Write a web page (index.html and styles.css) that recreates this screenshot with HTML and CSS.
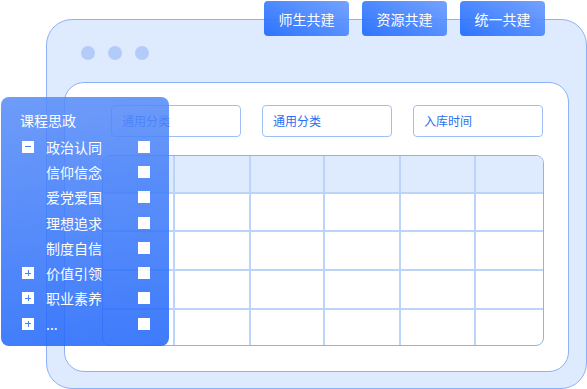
FILE: index.html
```html
<!DOCTYPE html>
<html lang="zh-CN">
<head>
    <meta charset="UTF-8">
    <title>课程思政</title>
    <link rel="stylesheet" href="styles.css">
</head>
<body>
    <div class="scene">
        <div class="window">
            <div class="dots">
                <span class="dot"></span>
                <span class="dot"></span>
                <span class="dot"></span>
            </div>
            <div class="panel">
                <div class="filters">
                    <div class="field">通用分类</div>
                    <div class="field">通用分类</div>
                    <div class="field">入库时间</div>
                </div>
                <div class="table">
                    <div class="cell head"></div><div class="cell head"></div><div class="cell head"></div><div class="cell head"></div><div class="cell head"></div><div class="cell head"></div>
                    <div class="cell"></div><div class="cell"></div><div class="cell"></div><div class="cell"></div><div class="cell"></div><div class="cell"></div>
                    <div class="cell"></div><div class="cell"></div><div class="cell"></div><div class="cell"></div><div class="cell"></div><div class="cell"></div>
                    <div class="cell"></div><div class="cell"></div><div class="cell"></div><div class="cell"></div><div class="cell"></div><div class="cell"></div>
                    <div class="cell last"></div><div class="cell last"></div><div class="cell last"></div><div class="cell last"></div><div class="cell last"></div><div class="cell last"></div>
                </div>
            </div>
        </div>

        <nav class="tabs">
            <button class="tab">师生共建</button>
            <button class="tab">资源共建</button>
            <button class="tab">统一共建</button>
        </nav>

        <aside class="tree">
            <div class="tree-title">课程思政</div>
            <div class="tree-row"><span class="toggle minus"></span><span class="label">政治认同</span><span class="check"></span></div>
            <div class="tree-row"><span></span><span class="label">信仰信念</span><span class="check"></span></div>
            <div class="tree-row"><span></span><span class="label">爱党爱国</span><span class="check"></span></div>
            <div class="tree-row"><span></span><span class="label">理想追求</span><span class="check"></span></div>
            <div class="tree-row"><span></span><span class="label">制度自信</span><span class="check"></span></div>
            <div class="tree-row"><span class="toggle plus"></span><span class="label">价值引领</span><span class="check"></span></div>
            <div class="tree-row"><span class="toggle plus"></span><span class="label">职业素养</span><span class="check"></span></div>
            <div class="tree-row"><span class="toggle plus"></span><span class="label">...</span><span class="check"></span></div>
        </aside>
    </div>
</body>
</html>
```

FILE: styles.css
```css
body {
    margin: 0;
    padding: 0;
    background-color: #fff;
    font-family: "Noto Sans CJK SC", "Noto Sans", sans-serif;
}
.scene {
    position: relative;
    width: 587px;
    height: 389px;
    overflow: hidden;
}
.window {
    box-sizing: border-box;
    width: 541px;
    height: 370px;
    margin: 19px 0 0 46px;
    padding: 0 17px 16px 17px;
    display: flex;
    flex-direction: column;
    background-color: #deebfe;
    border: 1px solid #8db1f6;
    border-radius: 26px;
}
.dots {
    display: flex;
    gap: 13px;
    margin: 26px 0 0 17px;
}
.dot {
    width: 14px;
    height: 14px;
    border-radius: 50%;
    background-color: #b3cbf9;
}
.panel {
    flex: 1;
    margin-top: 22px;
    background-color: #fff;
    border: 1px solid #8db1f6;
    border-radius: 20px;
}
.filters {
    display: flex;
    gap: 21px;
    margin: 22px 24px 0 46px;
}
.field {
    box-sizing: border-box;
    width: 130px;
    height: 32px;
    padding-left: 10px;
    border: 1px solid #9fbef8;
    border-radius: 4px;
    font-size: 12px;
    line-height: 30px;
    color: #2d6df3;
}
.table {
    box-sizing: border-box;
    height: 191px;
    margin: 18px 24px 0 37px;
    display: grid;
    grid-template-columns: 72px 76px 74px 76px 75px 1fr;
    grid-template-rows: 38px 38px 39px 39px 1fr;
    border: 1px solid #8db1f6;
    border-radius: 8px;
    overflow: hidden;
}
.cell {
    border-right: 2px solid #bcd3fb;
    border-bottom: 2px solid #bcd3fb;
}
.cell:nth-child(6n) {
    border-right: none;
}
.cell.head {
    background-color: #deebfe;
}
.cell.last {
    border-bottom: none;
}
.tabs {
    position: absolute;
    top: 1px;
    left: 264px;
    display: flex;
    gap: 13px;
}
.tab {
    width: 85px;
    height: 35px;
    padding: 0;
    border: none;
    border-radius: 4px;
    background: linear-gradient(30deg, #216cff, #6a9cff);
    opacity: 0.93;
    color: #fff;
    font-family: inherit;
    font-size: 14px;
}
.tree {
    position: absolute;
    top: 97px;
    left: 1px;
    box-sizing: border-box;
    width: 168px;
    height: 249px;
    padding: 13px 19px 0 21px;
    border-radius: 8px;
    background: linear-gradient(172deg, #5a8ef9, #2268fb);
    opacity: 0.87;
    color: #fff;
}
.tree-title {
    margin-left: -2px;
    margin-bottom: 4px;
    font-size: 14px;
    line-height: 20px;
}
.tree-row {
    display: grid;
    grid-template-columns: 12px 1fr 12px;
    column-gap: 12px;
    align-items: center;
    height: 25.3px;
    font-size: 14px;
}
.toggle {
    position: relative;
    width: 12px;
    height: 12px;
    background-color: #fff;
}
.toggle:before,
.toggle.plus:after {
    content: "";
    position: absolute;
    left: 3px;
    top: 5.5px;
    width: 6px;
    height: 1px;
    background-color: #2f6ff6;
}
.toggle.plus:after {
    left: 5.5px;
    top: 3px;
    width: 1px;
    height: 6px;
}
.check {
    width: 12px;
    height: 12px;
    background-color: #fff;
}
```
